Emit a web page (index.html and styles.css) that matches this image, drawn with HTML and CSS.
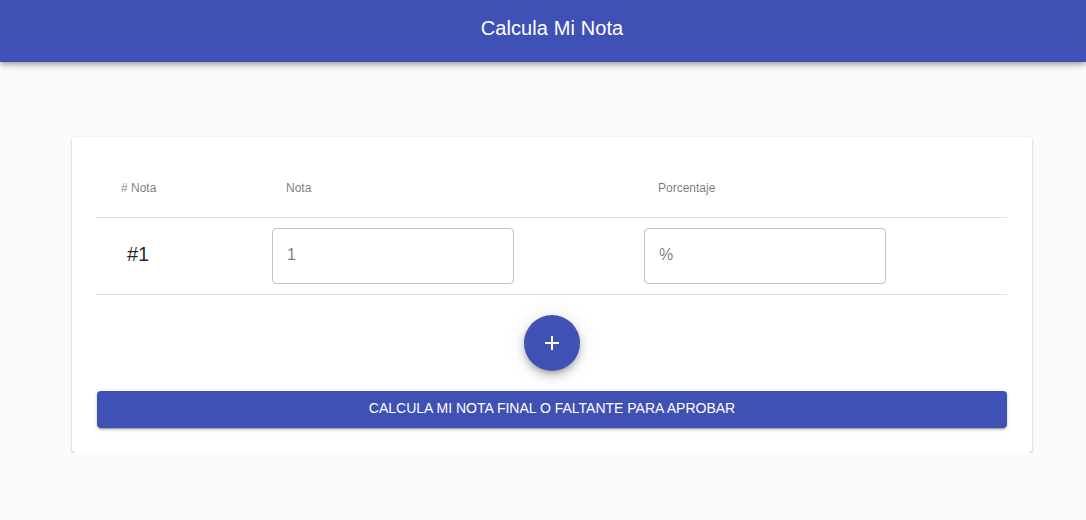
FILE: index.html
```html
<!DOCTYPE html>
<html lang="es">
<head>
<meta charset="utf-8">
<title>Calcula Mi Nota</title>
<link rel="stylesheet" href="styles.css">
</head>
<body>
<header class="toolbar">
  <span class="toolbar-title">Calcula Mi Nota</span>
</header>
<main class="content">
  <section class="card">
    <div class="table">
      <div class="row header-row">
        <div class="cell head first">#&nbsp;Nota</div>
        <div class="cell head">Nota</div>
        <div class="cell head">Porcentaje</div>
      </div>
      <div class="row data-row">
        <div class="cell index">#1</div>
        <div class="cell"><div class="field">1</div></div>
        <div class="cell"><div class="field">%</div></div>
      </div>
    </div>
    <div class="fab-wrap">
      <button class="fab" type="button" aria-label="Agregar">
        <svg width="24" height="24" viewBox="0 0 24 24"><path d="M19 13h-6v6h-2v-6H5v-2h6V5h2v6h6v2z" fill="#fff"/></svg>
      </button>
    </div>
    <button class="submit" type="button">CALCULA MI NOTA FINAL O FALTANTE PARA APROBAR</button>
  </section>
</main>
</body>
</html>
```
FILE: styles.css
```css
* { box-sizing: border-box; }
html, body { margin: 0; padding: 0; }
body {
  background: #fafafa;
  font-family: "Liberation Sans", Arial, sans-serif;
  color: rgba(0,0,0,.87);
}
.toolbar {
  height: 62px;
  background: #3f51b5;
  color: #fff;
  display: flex;
  align-items: center;
  justify-content: center;
  box-shadow: 0 2px 4px -1px rgba(0,0,0,.2), 0 4px 5px 0 rgba(0,0,0,.14), 0 1px 10px 0 rgba(0,0,0,.12);
  position: relative;
  z-index: 2;
}
.toolbar-title {
  font-size: 20px;
  padding-left: 18px;
  padding-bottom: 6px;
  letter-spacing: 0.1px;
}
.content {
  padding: 75px 54px 0 72px;
}
.card {
  width: 960px;
  background: #fff;
  border-radius: 4px;
  padding: 24px 25px 25px 24px;
  box-shadow: 0 2px 2px 0 rgba(0,0,0,.22), 0 0 3px 0 rgba(0,0,0,.1);
}
.row {
  display: grid;
  grid-template-columns: 176px 372px 1fr;
  align-items: center;
  border-bottom: 1px solid rgba(0,0,0,.12);
}
.header-row { height: 57px; }
.data-row { height: 77px; }
.head {
  font-size: 12px;
  color: rgba(0,0,0,.54);
  padding-left: 14px;
  padding-bottom: 2px;
}
.head.first { padding-left: 25px; }
.index {
  font-size: 20px;
  padding-left: 31px;
  padding-bottom: 3px;
  color: rgba(0,0,0,.87);
}
.field {
  width: 242px;
  height: 56px;
  border: 1px solid rgba(0,0,0,.24);
  border-radius: 4px;
  padding-left: 14px;
  padding-bottom: 2px;
  display: flex;
  align-items: center;
  font-size: 16px;
  color: rgba(0,0,0,.54);
}
.fab-wrap {
  display: flex;
  justify-content: center;
  padding: 20px 0 20px;
}
.fab {
  width: 56px;
  height: 56px;
  border-radius: 50%;
  border: none;
  background: #3f51b5;
  display: flex;
  align-items: center;
  justify-content: center;
  padding: 0;
  box-shadow: 0 3px 5px -1px rgba(0,0,0,.2), 0 6px 10px 0 rgba(0,0,0,.14), 0 1px 18px 0 rgba(0,0,0,.12);
}
.submit {
  display: block;
  width: 910px;
  margin-left: 1px;
  height: 37px;
  border: none;
  border-radius: 4px;
  background: #3f51b5;
  color: #fff;
  font-family: "Liberation Sans", Arial, sans-serif;
  font-size: 14px;
  padding: 0 0 3px;
  box-shadow: 0 3px 1px -2px rgba(0,0,0,.2), 0 2px 2px 0 rgba(0,0,0,.14), 0 1px 5px 0 rgba(0,0,0,.12);
}
```
